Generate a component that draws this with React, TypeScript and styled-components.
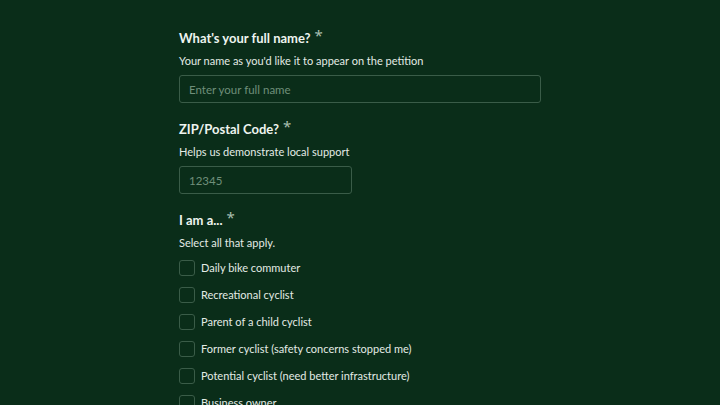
import React from "react";
import styled, { createGlobalStyle } from "styled-components";

const Global = createGlobalStyle`
  html, body { margin: 0; padding: 0; background: #0a2d19; }
  body { font-family: Lato, "Noto Sans", sans-serif; color: #e8f0ea; }
  * { box-sizing: border-box; }
`;

const Page = styled.div`
  min-height: 405px;
  background: #0a2d19;
  padding-top: 28px;
`;

const Form = styled.form`
  width: 362px;
  margin: 0 auto;
  display: flex;
  flex-direction: column;
`;

const Field = styled.div`
  display: flex;
  flex-direction: column;
  margin-bottom: 16px;
`;

const Label = styled.label`
  font-size: 13px;
  font-weight: 700;
  line-height: 20px;
  color: #eef4ef;
`;

const Req = styled.span`
  font-family: "Noto Sans", sans-serif;
  color: #a9bfb0;
  font-size: 15px;
  font-weight: 400;
  margin-left: 4px;
  vertical-align: top;
  position: relative;
  top: -3px;
`;

const Hint = styled.p`
  margin: 5px 0 6px;
  font-size: 11px;
  line-height: 16px;
  color: #e3ebe5;
`;

const Input = styled.input<{ $w?: number }>`
  width: ${(p) => (p.$w ? `${p.$w}px` : "100%")};
  height: 28px;
  padding: 0 9px;
  background: transparent;
  border: 1px solid #3a5c48;
  border-radius: 3px;
  color: #e8f0ea;
  font-family: inherit;
  font-size: 11.5px;
  outline: none;
  &::placeholder { color: #6f8f7a; }
`;

const List = styled.div`
  display: flex;
  flex-direction: column;
  gap: 11px;
  margin-top: 3px;
`;

const Option = styled.label`
  display: flex;
  align-items: center;
  gap: 6px;
  font-size: 11px;
  line-height: 16px;
  color: #e3ebe5;
`;

const Box = styled.span`
  width: 16px;
  height: 16px;
  border: 1px solid #3a5c48;
  border-radius: 3px;
  flex: none;
`;

const roles = [
  "Daily bike commuter",
  "Recreational cyclist",
  "Parent of a child cyclist",
  "Former cyclist (safety concerns stopped me)",
  "Potential cyclist (need better infrastructure)",
  "Business owner",
];

export default function App() {
  return (
    <>
      <Global />
      <Page>
        <Form onSubmit={(e) => e.preventDefault()}>
          <Field>
            <Label>
              What's your full name?<Req>*</Req>
            </Label>
            <Hint>Your name as you'd like it to appear on the petition</Hint>
            <Input placeholder="Enter your full name" />
          </Field>
          <Field>
            <Label>
              ZIP/Postal Code?<Req>*</Req>
            </Label>
            <Hint>Helps us demonstrate local support</Hint>
            <Input $w={173} placeholder="12345" />
          </Field>
          <Field>
            <Label>
              I am a...<Req>*</Req>
            </Label>
            <Hint>Select all that apply.</Hint>
            <List>
              {roles.map((r) => (
                <Option key={r}>
                  <Box />
                  {r}
                </Option>
              ))}
            </List>
          </Field>
        </Form>
      </Page>
    </>
  );
}
